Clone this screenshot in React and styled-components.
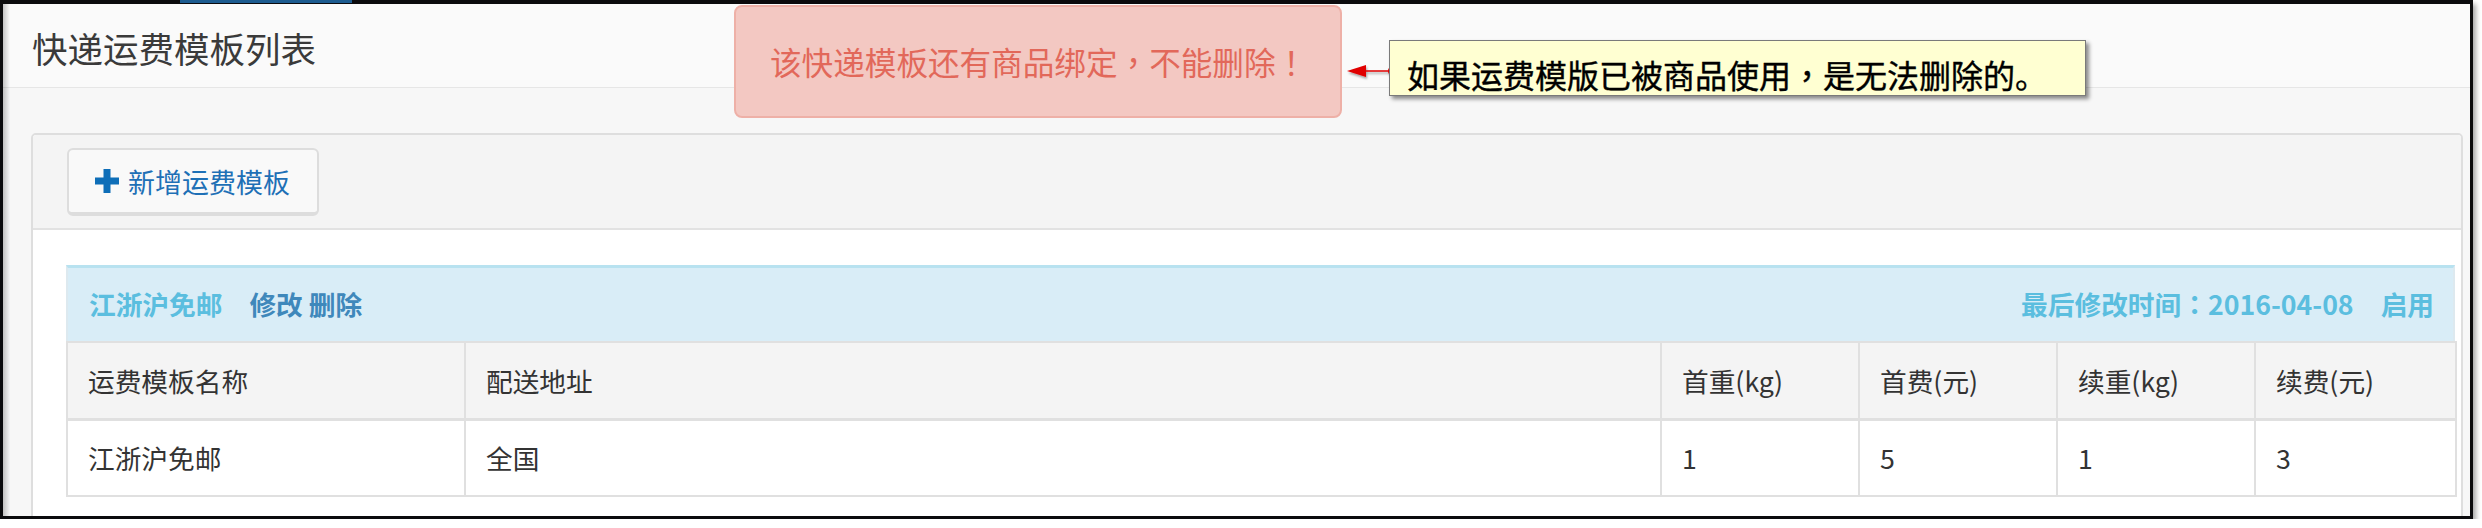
import React from 'react';
import styled, { createGlobalStyle } from 'styled-components';

const Global = createGlobalStyle`
  html, body { margin: 0; padding: 0; background: #ffffff; }
  body {
    font-family: "Noto Sans CJK SC", "Noto Sans", sans-serif;
    color: #333;
    text-spacing-trim: space-all;
  }
  * { box-sizing: border-box; }
`;

const Frame = styled.div`
  position: relative;
  width: 2473px;
  height: 519px;
  border: 3px solid #0b0b0d;
  border-top-width: 4px;
  box-shadow: 3px 4px 5px rgba(0, 0, 0, 0.35);
  &::after {
    content: "";
    position: absolute;
    left: 0; top: 0; bottom: 0;
    width: 7px;
    background: linear-gradient(to right, rgba(0,0,0,0.22), rgba(0,0,0,0));
    pointer-events: none;
  }
`;

const TabMark = styled.div`
  position: absolute;
  top: -4px;
  left: 177px;
  width: 172px;
  height: 3px;
  background: #1d5c90;
`;

const Viewport = styled.div`
  width: 100%;
  height: 100%;
  overflow: hidden;
  display: flex;
  flex-direction: column;
  background: #f7f7f7;
`;

const PageHeader = styled.header`
  flex: none;
  height: 84px;
  display: flex;
  align-items: center;
  padding-left: 29px;
  background: #fafafa;
  border-bottom: 1px solid #e6e6e6;
`;

const Title = styled.h1`
  margin: 0;
  font-size: 35.5px;
  font-weight: 400;
  color: #3a3a3a;
  line-height: 1;
  padding-top: 4px;
`;

const Content = styled.main`
  flex: 1;
  padding: 45px 7px 0 28px;
`;

const Portlet = styled.section`
  min-height: 420px;
  border: 2px solid #dedede;
  border-radius: 5px;
  background: #ffffff;
  overflow: hidden;
`;

const Toolbar = styled.div`
  display: flex;
  align-items: center;
  padding: 13px 34px 12px;
  background: #f4f4f4;
  border-bottom: 2px solid #e2e2e2;
`;

const AddButton = styled.button`
  display: flex;
  align-items: center;
  gap: 9px;
  width: 252px;
  height: 68px;
  padding: 0 0 0 26px;
  border: 2px solid #dddddd;
  border-bottom-width: 4px;
  border-radius: 6px;
  background: #f9f9f9;
  color: #1e70b6;
  font-family: "Noto Sans CJK SC", sans-serif;
  font-size: 27px;
  line-height: 1;
  cursor: pointer;
`;

const PanelBody = styled.div`
  padding: 35px 6px 40px 33px;
  background: #ffffff;
`;

const TemplateCard = styled.div`
  width: 100%;
`;

const InfoBar = styled.div`
  display: flex;
  align-items: center;
  justify-content: space-between;
  height: 76px;
  padding: 0 19px 0 21px;
  background: #d9edf7;
  border-top: 3px solid #b8e2f0;
  border-left: 2px solid #dde9ef;
  border-right: 2px solid #dde9ef;
  font-size: 26.7px;
  font-weight: 700;
  line-height: 1;
`;

const InfoGroup = styled.div`
  display: flex;
  align-items: center;
  gap: ${p => p.$gap}px;
`;

const InfoText = styled.span`
  color: ${p => (p.$dark ? '#3f88bb' : '#5bbedf')};
`;

/* full-width punctuation drawn centred in its cell, as in the reference */
const Punct = styled.span`
  font-family: "Noto Sans CJK TC", "Noto Sans CJK SC", sans-serif;
`;

const Table = styled.table`
  width: 100%;
  table-layout: fixed;
  border-collapse: collapse;
  font-size: 26.7px;
  color: #333;
`;

const Col = styled.col`
  width: ${p => p.$w}px;
`;

const HeadCell = styled.th`
  height: 77px;
  padding: 0 20px;
  text-align: left;
  font-weight: 400;
  background: #f4f4f4;
  border: 2px solid #e0e0e0;
  border-bottom-width: 3px;
`;

const Cell = styled.td`
  height: 77px;
  padding: 0 20px;
  border: 2px solid #e0e0e0;
  background: #ffffff;
`;

const Alert = styled.div`
  position: absolute;
  left: 731px;
  top: 1px;
  width: 608px;
  height: 113px;
  display: flex;
  align-items: center;
  padding-left: 34px;
  background: #f3c8c2;
  border: 2px solid #eeb0a7;
  border-radius: 8px;
  color: #e2685a;
  font-size: 31.6px;
  line-height: 1;
  white-space: nowrap;
`;

const Note = styled.div`
  position: absolute;
  left: 1386px;
  top: 36px;
  width: 697px;
  height: 56px;
  display: flex;
  align-items: center;
  padding: 12px 0 0 17px;
  background: #ffffd2;
  border: 1px solid #7a7a7a;
  box-shadow: 3px 3px 4px rgba(0, 0, 0, 0.45);
  color: #000;
  font-size: 32px;
  font-weight: 400;
  line-height: 1;
  white-space: nowrap;
  -webkit-text-stroke: 0.4px #000;
`;

const Pointer = styled.svg`
  position: absolute;
  left: 1340px;
  top: 54px;
  width: 54px;
  height: 18px;
  overflow: visible;
`;

const PlusIcon = () => (
  <svg width="24" height="24" viewBox="0 0 24 24" aria-hidden="true">
    <rect x="8.5" y="0" width="7" height="24" fill="#0e6eb8" />
    <rect x="0" y="8.5" width="24" height="7" fill="#0e6eb8" />
  </svg>
);

const columns = [
  { w: 398, title: '运费模板名称', value: '江浙沪免邮' },
  { w: 1196, title: '配送地址', value: '全国' },
  { w: 198, title: '首重(kg)', value: '1' },
  { w: 198, title: '首费(元)', value: '5' },
  { w: 198, title: '续重(kg)', value: '1' },
  { w: 201, title: '续费(元)', value: '3' },
];

export default function App() {
  return (
    <>
      <Global />
      <Frame>
        <TabMark />
        <Viewport>
          <PageHeader>
            <Title>快递运费模板列表</Title>
          </PageHeader>
          <Content>
            <Portlet>
              <Toolbar>
                <AddButton type="button">
                  <PlusIcon />
                  新增运费模板
                </AddButton>
              </Toolbar>
              <PanelBody>
                <TemplateCard>
                  <InfoBar>
                    <InfoGroup $gap={27}>
                      <InfoText>江浙沪免邮</InfoText>
                      <InfoText $dark>修改 删除</InfoText>
                    </InfoGroup>
                    <InfoGroup $gap={27}>
                      <InfoText>
                        最后修改时间<Punct>：</Punct>2016-04-08
                      </InfoText>
                      <InfoText>启用</InfoText>
                    </InfoGroup>
                  </InfoBar>
                  <Table>
                    <colgroup>
                      {columns.map(c => (
                        <Col key={c.title} $w={c.w} />
                      ))}
                    </colgroup>
                    <thead>
                      <tr>
                        {columns.map(c => (
                          <HeadCell key={c.title}>{c.title}</HeadCell>
                        ))}
                      </tr>
                    </thead>
                    <tbody>
                      <tr>
                        {columns.map(c => (
                          <Cell key={c.title}>{c.value}</Cell>
                        ))}
                      </tr>
                    </tbody>
                  </Table>
                </TemplateCard>
              </PanelBody>
            </Portlet>
          </Content>
        </Viewport>
        <Alert>
          该快递模板还有商品绑定<Punct>，</Punct>不能删除<Punct>！</Punct>
        </Alert>
        <Pointer viewBox="0 0 54 18">
          <defs>
            <filter id="ps" x="-20%" y="-20%" width="160%" height="180%">
              <feDropShadow dx="1" dy="2" stdDeviation="1" floodColor="#000" floodOpacity="0.35" />
            </filter>
          </defs>
          <g filter="url(#ps)">
            <polygon points="4,13 23,7 23,19" fill="#e00000" />
            <line x1="22" y1="13" x2="48" y2="13" stroke="#e00000" strokeWidth="1.5" />
            <circle cx="49" cy="13" r="4" fill="#e00000" />
          </g>
        </Pointer>
        <Note>
          如果运费模版已被商品使用<Punct>，</Punct>是无法删除的。
        </Note>
      </Frame>
    </>
  );
}
